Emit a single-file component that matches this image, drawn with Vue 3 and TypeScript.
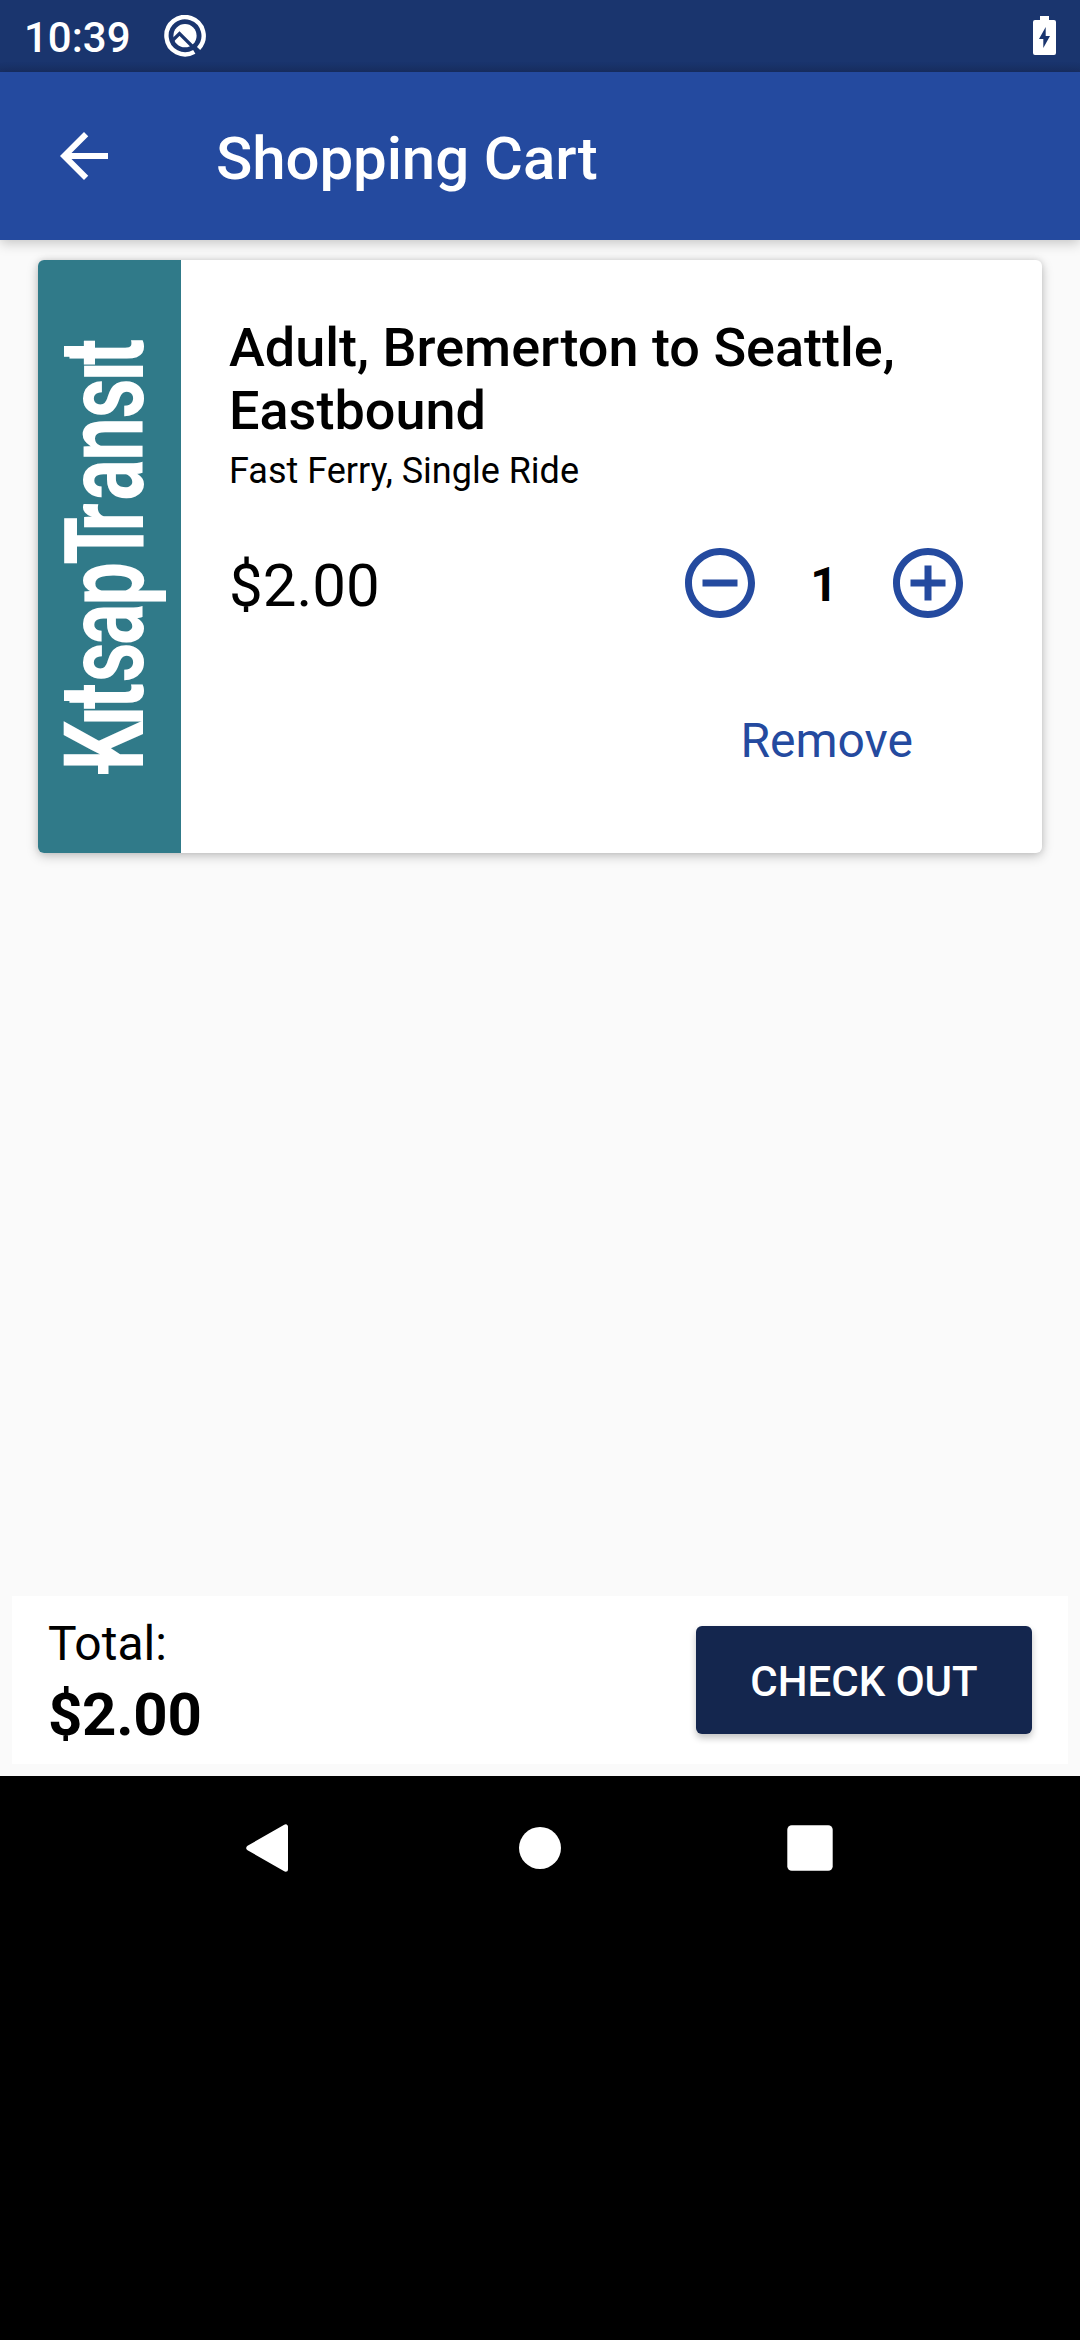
<script setup lang="ts">
import { computed, ref } from 'vue'

const unitPrice = 2
const quantity = ref(1)
const format = (value: number): string => `$${value.toFixed(2)}`
const total = computed(() => format(unitPrice * quantity.value))

const decrease = () => {
  if (quantity.value > 1) quantity.value--
}
const increase = () => {
  quantity.value++
}

// Horizontal offset of every letter in the agency wordmark.
const letterOffsets = [-6.4, 56.3, 81, 119.5, 173, 229, 287.5, 335, 379, 436, 496.7, 549, 572.7].join(' ')
</script>

<template>
  <div class="screen">
    <header class="status">
      <span class="time">10:39</span>
      <svg class="beta" viewBox="0 0 42 42" width="42" height="42">
        <path d="M30.3 36.8A18.6 18.6 0 1 1 34.6 33.4" fill="none" stroke="#fff" stroke-width="4.4" />
        <circle cx="21" cy="20.7" r="11.6" fill="#fff" />
        <path d="M8.5 25.5L15.5 18.5L33.5 36.5" fill="none" stroke="#1a356e" stroke-width="3.2" />
      </svg>
      <svg class="battery" viewBox="0 0 23 39" width="23" height="39">
        <path fill="#fff" fill-rule="evenodd" d="M7 0h9v4h5a2 2 0 0 1 2 2v31a2 2 0 0 1-2 2H2a2 2 0 0 1-2-2V6a2 2 0 0 1 2-2h5zM12.7 11L6 23h4.3v9L17 20h-4.3z" />
      </svg>
    </header>

    <div class="appbar">
      <svg class="back" viewBox="0 0 24 24" width="72" height="72">
        <path fill="#fff" d="M20 11H7.83l5.59-5.59L12 4l-8 8 8 8 1.41-1.41L7.83 13H20v-2z" />
      </svg>
      <h1 class="title">Shopping Cart</h1>
    </div>

    <main class="content">
      <article class="card">
        <div class="brand">
          <svg viewBox="0 0 143 593" width="143" height="593">
            <g transform="translate(105 506) rotate(-90)">
              <g fill="#fff">
                <rect x="-8" y="-45" width="12" height="10.5" />
                <rect x="65" y="-79" width="10.8" height="22" />
                <rect x="409.2" y="-79" width="10.8" height="22" />
              </g>
              <text class="wordmark" transform="scale(0.7 1)" :x="letterOffsets" y="0">KıtsapTransıt</text>
            </g>
          </svg>
        </div>
        <div class="details">
          <h2 class="name">Adult, Bremerton to Seattle, Eastbound</h2>
          <p class="kind">Fast Ferry, Single Ride</p>
          <div class="row">
            <span class="price">{{ format(unitPrice) }}</span>
            <div class="stepper">
              <svg viewBox="0 0 24 24" width="84" height="84" @click="decrease">
                <path fill="#244a9f" d="M7 11v2h10v-2H7zm5-9C6.48 2 2 6.48 2 12s4.48 10 10 10 10-4.48 10-10S17.52 2 12 2zm0 18c-4.41 0-8-3.59-8-8s3.59-8 8-8 8 3.59 8 8-3.59 8-8 8z" />
              </svg>
              <span class="count">{{ quantity }}</span>
              <svg viewBox="0 0 24 24" width="84" height="84" @click="increase">
                <path fill="#244a9f" d="M13 7h-2v4H7v2h4v4h2v-4h4v-2h-4V7zm-1-5C6.48 2 2 6.48 2 12s4.48 10 10 10 10-4.48 10-10S17.52 2 12 2zm0 18c-4.41 0-8-3.59-8-8s3.59-8 8-8 8 3.59 8 8-3.59 8-8 8z" />
              </svg>
            </div>
          </div>
          <a class="remove">Remove</a>
        </div>
      </article>
    </main>

    <footer class="summary">
      <div class="totals">
        <span class="label">Total:</span>
        <span class="amount">{{ total }}</span>
      </div>
      <button class="checkout">CHECK OUT</button>
    </footer>

    <nav class="nav">
      <svg viewBox="0 0 72 72" width="72" height="72">
        <path d="M14.8 36L51.5 14.8V57.2Z" fill="#fff" stroke="#fff" stroke-width="5" stroke-linejoin="round" />
      </svg>
      <svg viewBox="0 0 72 72" width="72" height="72"><circle cx="36" cy="36" r="21" fill="#fff" /></svg>
      <svg viewBox="0 0 72 72" width="72" height="72"><rect x="13.3" y="13.3" width="45.4" height="45.4" rx="4.5" fill="#fff" /></svg>
    </nav>
  </div>
</template>

<style>
body {
  background: #000;
}
</style>

<style scoped>
.screen {
  width: 1080px;
  height: 2340px;
  display: flex;
  flex-direction: column;
  overflow: hidden;
  background: #000;
  color: #000;
  font-family: Roboto, sans-serif;
}
svg {
  display: block;
  flex: none;
}
h1,
h2,
p {
  margin: 0;
}
.status {
  flex: none;
  height: 72px;
  display: flex;
  align-items: flex-start;
  background: linear-gradient(#1a356e 0, #1a356e 62px, #182f64 72px);
}
.time {
  width: 140px;
  padding: 13px 0 0 24px;
  box-sizing: border-box;
  color: #fff;
  font-size: 42px;
  line-height: 49px;
  font-weight: 500;
}
.beta {
  margin: 15px 0 0 24px;
}
.battery {
  margin: 16px 24px 0 auto;
}
.appbar {
  flex: none;
  height: 168px;
  display: flex;
  align-items: center;
  background: #244a9f;
  box-shadow: 0 3px 12px rgba(0, 0, 0, 0.22);
  z-index: 1;
}
.back {
  margin-left: 48px;
}
.title {
  margin: 6px 0 0 96px;
  color: #fff;
  font-size: 60px;
  line-height: 70px;
  font-weight: 500;
  letter-spacing: -0.1px;
}
.content {
  flex: none;
  height: 1356px;
  box-sizing: border-box;
  padding: 20px 38px 0;
  background: #fafafa;
}
.card {
  height: 593px;
  display: flex;
  overflow: hidden;
  border-radius: 6px;
  background: #fff;
  box-shadow: 0 3px 12px rgba(0, 0, 0, 0.22), 0 0 6px rgba(0, 0, 0, 0.1);
}
.brand {
  flex: none;
  width: 143px;
  background: #307a89;
}
.wordmark {
  font-family: Roboto, sans-serif;
  font-size: 111px;
  font-weight: 700;
  fill: #fff;
}
.details {
  flex: 1;
  display: flex;
  flex-direction: column;
  padding: 56px 72px 0 48px;
}
.name {
  font-size: 54px;
  line-height: 63px;
  font-weight: 500;
}
.kind {
  margin-top: 8px;
  font-size: 36px;
  line-height: 42px;
}
.row {
  display: flex;
  align-items: center;
  justify-content: space-between;
  height: 84px;
  margin-top: 49px;
}
.price {
  margin-top: 4px;
  font-size: 60px;
}
.stepper {
  display: flex;
  align-items: center;
}
.count {
  width: 124px;
  padding-top: 2px;
  text-align: center;
  font-size: 48px;
  font-weight: 700;
}
.remove {
  align-self: flex-end;
  margin: 88px 57px 0 0;
  color: #244a9f;
  font-size: 48px;
  line-height: 56px;
}
.summary {
  flex: none;
  height: 180px;
  box-sizing: border-box;
  display: flex;
  align-items: center;
  justify-content: space-between;
  border: 12px solid #fafafa;
  border-top: 0;
  padding: 0 36px;
  background: #fff;
}
.totals {
  display: flex;
  flex-direction: column;
  padding-top: 4px;
}
.label {
  font-size: 48px;
  line-height: 57px;
}
.amount {
  margin-top: 8px;
  font-size: 60px;
  line-height: 70px;
  font-weight: 700;
  letter-spacing: -0.3px;
}
.checkout {
  width: 336px;
  height: 108px;
  padding: 2px 0 0;
  border: 0;
  border-radius: 6px;
  background: #14264e;
  color: #fff;
  font-family: Roboto, sans-serif;
  font-size: 42px;
  font-weight: 500;
  box-shadow: 0 4px 7px rgba(0, 0, 0, 0.24);
}
.nav {
  flex: none;
  height: 144px;
  display: flex;
  justify-content: center;
  align-items: center;
  gap: 198px;
}
</style>
